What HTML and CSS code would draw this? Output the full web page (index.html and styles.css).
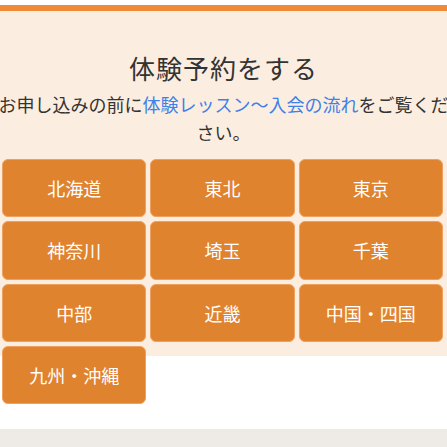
FILE: index.html
```html
<!DOCTYPE html>
<html lang="ja">
<head>
<meta charset="utf-8">
<link rel="stylesheet" href="styles.css">
</head>
<body>
<div class="top-gap"></div>
<div class="top-bar"></div>
<section class="reserve">
  <h2 class="reserve-title">体験予約をする</h2>
  <p class="reserve-lead">お申し込みの前に<a class="reserve-link" href="#">体験レッスン〜入会の流れ</a>をご覧ください。</p>
  <div class="area-grid">
    <a class="area-btn" href="#">北海道</a>
    <a class="area-btn" href="#">東北</a>
    <a class="area-btn" href="#">東京</a>
    <a class="area-btn" href="#">神奈川</a>
    <a class="area-btn" href="#">埼玉</a>
    <a class="area-btn" href="#">千葉</a>
    <a class="area-btn" href="#">中部</a>
    <a class="area-btn" href="#">近畿</a>
    <a class="area-btn" href="#">中国・四国</a>
    <a class="area-btn" href="#">九州・沖縄</a>
  </div>
</section>
<div class="spacer"></div>
<footer class="footer"></footer>
</body>
</html>
```

FILE: styles.css
```css
html, body {
  margin: 0;
  padding: 0;
  background: #ffffff;
  font-family: "Noto Sans CJK JP", "Noto Sans", sans-serif;
  overflow-x: hidden;
}

.top-gap {
  height: 5px;
  background: #ffffff;
}

.top-bar {
  height: 6px;
  background: #ef8b38;
}

.reserve {
  background: #fbeee0;
  height: 345px;
  padding-top: 39px;
  box-sizing: border-box;
}

.reserve-title {
  margin: 0;
  font-size: 26px;
  line-height: 36px;
  font-weight: 400;
  letter-spacing: 1px;
  color: #333333;
  text-align: center;
}

.reserve-lead {
  margin: 4px -4px 0;
  font-size: 18px;
  line-height: 28px;
  color: #333333;
  text-align: center;
}

.reserve-link {
  color: #3f80ea;
  text-decoration: none;
}

.area-grid {
  margin-top: 13px;
  padding: 0 4px 0 2px;
  display: grid;
  grid-template-columns: repeat(3, 1fr);
  grid-auto-rows: 58.3px;
  gap: 4px;
}

.area-btn {
  display: flex;
  align-items: center;
  justify-content: center;
  background: #e0832f;
  border: 1px solid #eea060;
  border-radius: 6px;
  color: #ffffff;
  font-size: 18px;
  text-decoration: none;
}

.spacer {
  height: 73px;
}

.footer {
  height: 40px;
  background: #eeebe6;
}
```
